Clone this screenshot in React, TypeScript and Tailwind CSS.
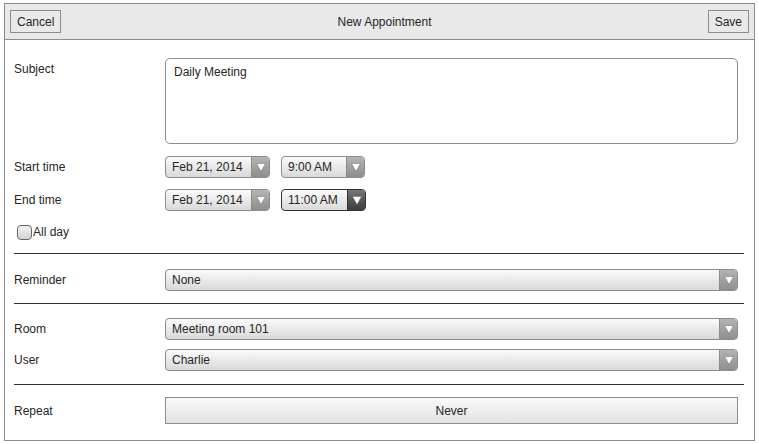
import React from 'react';

const font = { fontFamily: '"Liberation Sans", Arial, sans-serif' };

const Arrow = ({ dark }: { dark?: boolean }) => (
  <div
    className={
      'flex w-[18px] shrink-0 items-center justify-center self-stretch border-l ' +
      (dark
        ? 'border-[#333] bg-gradient-to-b from-[#777] to-[#3c3c3c]'
        : 'border-[#8c8c8c] bg-gradient-to-b from-[#b4b4b4] to-[#8e8e8e]')
    }
  >
    <svg width="10" height="9" viewBox="0 0 10 9">
      <path d="M0.5 0.5 L9.5 0.5 L5 8.5 Z" fill="#fff" stroke="#6a6a6a" strokeWidth="0.5" />
    </svg>
  </div>
);

const Select = ({ value, className = '', dark }: { value: string; className?: string; dark?: boolean }) => (
  <div
    className={
      'flex h-[22px] overflow-hidden rounded-[4px] border bg-gradient-to-b from-[#fbfbfb] to-[#d9d9d9] ' +
      (dark ? 'border-[#333] ' : 'border-[#8c8c8c] ') +
      className
    }
  >
    <div className="flex flex-1 items-center pl-[6px] text-[12px] text-[#262626]">{value}</div>
    <Arrow dark={dark} />
  </div>
);

const Divider = () => <div className="mr-[10px] h-px bg-[#333]" />;

const Row = ({ label, children, className = '' }: { label: string; children: React.ReactNode; className?: string }) => (
  <div className={'flex items-center ' + className}>
    <div className="w-[151px] shrink-0 text-[12px] text-[#262626]">{label}</div>
    <div className="mr-[16px] flex flex-1 gap-[11px]">{children}</div>
  </div>
);

export default function App() {
  return (
    <div className="h-[444px] w-[759px] bg-white pl-[4px] pt-[3px]" style={font}>
      <div className="flex h-[438px] w-[751px] flex-col border border-[#8c8c8c]">
        {/* header */}
        <div className="flex h-[36px] shrink-0 items-center justify-between border-b border-[#8c8c8c] bg-[#e9e9e9] px-[5px]">
          <button className="h-[23px] border border-[#8c8c8c] px-[6px] text-[12px] text-[#262626]">Cancel</button>
          <div className="text-[12px] text-[#262626]">New Appointment</div>
          <button className="h-[23px] border border-[#8c8c8c] px-[6px] text-[12px] text-[#262626]">Save</button>
        </div>

        <div className="flex flex-col pl-[9px]">
          <div className="mt-[18px] flex">
            <div className="w-[151px] shrink-0 pt-[2px] text-[12px] text-[#262626]">Subject</div>
            <div className="mr-[16px] h-[86px] flex-1 rounded-[5px] border border-[#8c8c8c] px-[8px] pt-[4px] text-[12px] text-[#262626]">
              Daily Meeting
            </div>
          </div>

          <Row label="Start time" className="mt-[12px]">
            <Select value="Feb 21, 2014" className="w-[105px]" />
            <Select value="9:00 AM" className="w-[84px]" />
          </Row>
          <Row label="End time" className="mt-[11px]">
            <Select value="Feb 21, 2014" className="w-[105px]" />
            <Select value="11:00 AM" className="w-[85px]" dark />
          </Row>

          <div className="mt-[12px] flex items-center">
            <div className="ml-[3px] h-[15px] w-[15px] rounded-[4px] border border-[#666] bg-gradient-to-b from-[#f4f4f4] to-[#d2d2d2]" />
            <span className="ml-px text-[12px] text-[#262626]">All day</span>
          </div>

          <div className="mt-[12px]"><Divider /></div>

          <Row label="Reminder" className="mt-[15px]">
            <Select value="None" className="flex-1" />
          </Row>

          <div className="mt-[12px]"><Divider /></div>

          <Row label="Room" className="mt-[14px]">
            <Select value="Meeting room 101" className="flex-1" />
          </Row>
          <Row label="User" className="mt-[9px]">
            <Select value="Charlie" className="flex-1" />
          </Row>

          <div className="mt-[13px]"><Divider /></div>

          <Row label="Repeat" className="mt-[12px]">
            <div className="flex h-[27px] flex-1 items-center justify-center border border-[#8c8c8c] bg-gradient-to-b from-[#fafafa] to-[#e2e2e2] text-[12px] text-[#262626]">
              Never
            </div>
          </Row>
        </div>
      </div>
    </div>
  );
}
